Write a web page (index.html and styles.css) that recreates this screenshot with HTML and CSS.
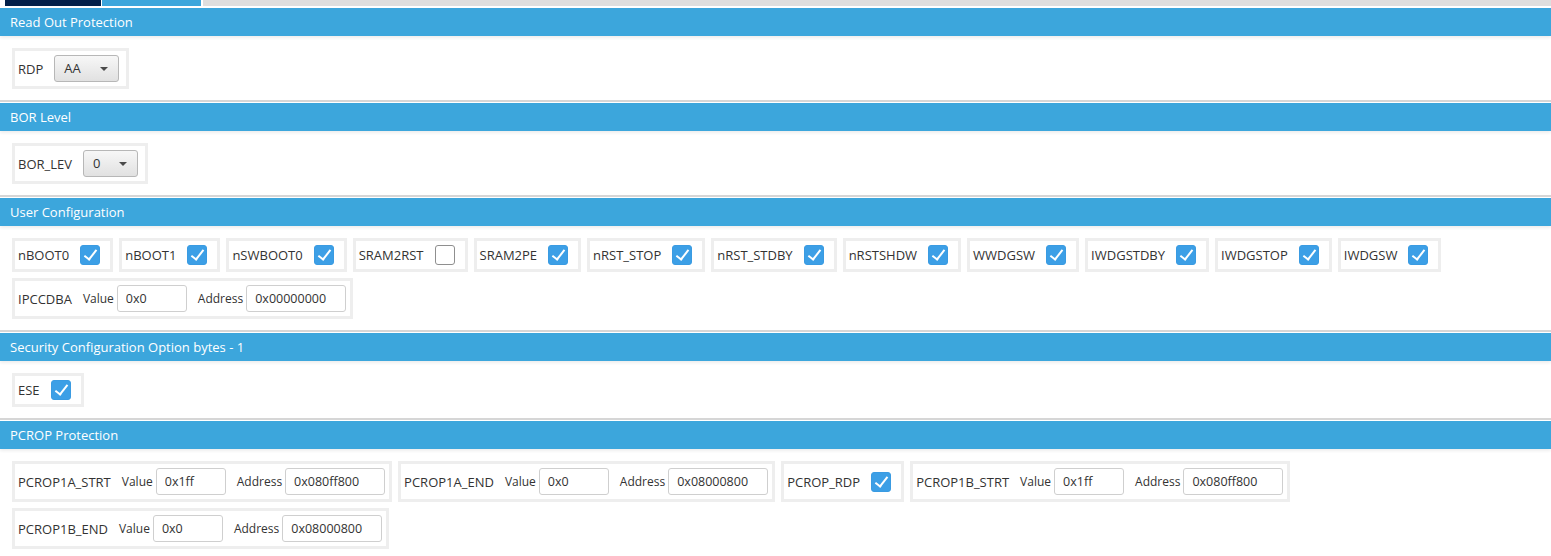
FILE: index.html
```html
<!DOCTYPE html>
<html lang="en">
<head>
  <meta charset="UTF-8" />
  <title>Option Bytes</title>
  <link rel="stylesheet" href="styles.css">
</head>
<body>

  <div class="tabs">
    <div class="tab tab-dark"></div>
    <div class="tab tab-blue"></div>
    <div class="tab-rest"></div>
  </div>

  <!-- Read Out Protection -->
  <div class="section first">
    <div class="section-head">Read Out Protection</div>
    <div class="section-body">
      <div class="row">
        <div class="field">
          <span class="label">RDP</span>
          <div class="select select-wide"><span>AA</span><i class="arrow"></i></div>
        </div>
      </div>
    </div>
  </div>

  <!-- BOR Level -->
  <div class="section">
    <div class="section-head">BOR Level</div>
    <div class="section-body">
      <div class="row">
        <div class="field">
          <span class="label">BOR_LEV</span>
          <div class="select"><span>0</span><i class="arrow"></i></div>
        </div>
      </div>
    </div>
  </div>

  <!-- User Configuration -->
  <div class="section">
    <div class="section-head">User Configuration</div>
    <div class="section-body">
      <div class="row">
        <div class="field"><span class="label">nBOOT0</span><span class="cb on"></span></div>
        <div class="field"><span class="label">nBOOT1</span><span class="cb on"></span></div>
        <div class="field"><span class="label">nSWBOOT0</span><span class="cb on"></span></div>
        <div class="field"><span class="label">SRAM2RST</span><span class="cb"></span></div>
        <div class="field"><span class="label">SRAM2PE</span><span class="cb on"></span></div>
        <div class="field"><span class="label">nRST_STOP</span><span class="cb on"></span></div>
        <div class="field"><span class="label">nRST_STDBY</span><span class="cb on"></span></div>
        <div class="field"><span class="label">nRSTSHDW</span><span class="cb on"></span></div>
        <div class="field"><span class="label">WWDGSW</span><span class="cb on"></span></div>
        <div class="field"><span class="label">IWDGSTDBY</span><span class="cb on"></span></div>
        <div class="field"><span class="label">IWDGSTOP</span><span class="cb on"></span></div>
        <div class="field"><span class="label">IWDGSW</span><span class="cb on"></span></div>
      </div>
      <div class="row">
        <div class="field">
          <span class="label">IPCCDBA</span>
          <span class="sub">Value</span><input class="inp inp-val" value="0x0">
          <span class="sub">Address</span><input class="inp inp-addr" value="0x00000000">
        </div>
      </div>
    </div>
  </div>

  <!-- Security Configuration -->
  <div class="section">
    <div class="section-head">Security Configuration Option bytes - 1</div>
    <div class="section-body">
      <div class="row">
        <div class="field"><span class="label">ESE</span><span class="cb on"></span></div>
      </div>
    </div>
  </div>

  <!-- PCROP Protection -->
  <div class="section">
    <div class="section-head">PCROP Protection</div>
    <div class="section-body">
      <div class="row">
        <div class="field">
          <span class="label">PCROP1A_STRT</span>
          <span class="sub">Value</span><input class="inp inp-val" value="0x1ff">
          <span class="sub">Address</span><input class="inp inp-addr" value="0x080ff800">
        </div>
        <div class="field">
          <span class="label">PCROP1A_END</span>
          <span class="sub">Value</span><input class="inp inp-val" value="0x0">
          <span class="sub">Address</span><input class="inp inp-addr" value="0x08000800">
        </div>
        <div class="field"><span class="label">PCROP_RDP</span><span class="cb on"></span></div>
        <div class="field">
          <span class="label">PCROP1B_STRT</span>
          <span class="sub">Value</span><input class="inp inp-val" value="0x1ff">
          <span class="sub">Address</span><input class="inp inp-addr" value="0x080ff800">
        </div>
      </div>
      <div class="row">
        <div class="field">
          <span class="label">PCROP1B_END</span>
          <span class="sub">Value</span><input class="inp inp-val" value="0x0">
          <span class="sub">Address</span><input class="inp inp-addr" value="0x08000800">
        </div>
      </div>
    </div>
  </div>

</body>
</html>
```

FILE: styles.css
```css
body {
  margin: 0;
  font-family: 'Open Sans', 'Noto Sans', sans-serif;
  font-size: 12px;
  color: #333;
  background: #fff;
  overflow: hidden;
}

/* top tab strip, cut off by the window */
.tabs {
  display: flex;
  height: 6px;
  padding-left: 5px;
}

.tab {
  width: 96px;
}

.tab-dark {
  background: #03204a;
}

.tab-blue {
  width: 99px;
  margin-left: 1px;
  background: #3ca6dc;
}

.tab-rest {
  flex: 1;
  margin-left: 2px;
  background: #dedede;
}

.section {
  border-top: 2px solid #d6d6d6;
  padding-top: 1px;
}

.section.first {
  border-top: none;
  padding-top: 2px;
}

.section-head {
  height: 28px;
  line-height: 28px;
  padding-left: 10px;
  background: #3ca6dc;
  color: #fff;
  font-size: 13px;
  box-shadow: 0 2px 3px rgba(0, 0, 0, 0.07);
}

.section-body {
  padding: 12px 12px 11px 12px;
  display: flex;
  flex-direction: column;
  gap: 6px;
}

.row {
  display: flex;
  gap: 6px;
}

.field {
  display: flex;
  align-items: center;
  border: 3px solid #eeeeee;
  padding: 4px 4px 4px 3px;
}

.label {
  font-size: 13px;
  margin-right: 11px;
}

.sub {
  margin-right: 3px;
}

.inp + .sub {
  margin-left: 11px;
}

.field .cb {
  margin-right: 6px;
}

.field .select {
  margin-right: 3px;
}

/* checkbox */
.cb {
  position: relative;
  width: 18px;
  height: 18px;
  border: 1px solid #8f8f8f;
  border-radius: 3px;
  background: #fff;
}

.cb.on {
  border-color: #3a9be2;
  background: #3c9fe6;
}

.cb.on::after {
  content: "";
  position: absolute;
  left: 6px;
  top: 1px;
  width: 5px;
  height: 11px;
  border-right: 2px solid #fff;
  border-bottom: 2px solid #fff;
  transform: rotate(38deg);
}

/* dropdown */
.select {
  position: relative;
  box-sizing: border-box;
  width: 55px;
  height: 27px;
  line-height: 25px;
  padding-left: 9px;
  border: 1px solid #b7b7b7;
  border-radius: 3px;
  background: linear-gradient(#f7f7f7, #e1e1e1);
  font-size: 13px;
  color: #333;
}

.select-wide {
  width: 65px;
}

.arrow {
  position: absolute;
  right: 10px;
  top: 11px;
  border-left: 4px solid transparent;
  border-right: 4px solid transparent;
  border-top: 4px solid #4a4a4a;
}

/* text inputs */
.inp {
  box-sizing: border-box;
  height: 27px;
  padding: 0 0 0 8px;
  border: 1px solid #cfcfcf;
  border-radius: 3px;
  font-family: inherit;
  font-size: 12.5px;
  color: #333;
  background: #fff;
}

.inp-val {
  width: 70px;
}

.inp-addr {
  width: 100px;
}
```
